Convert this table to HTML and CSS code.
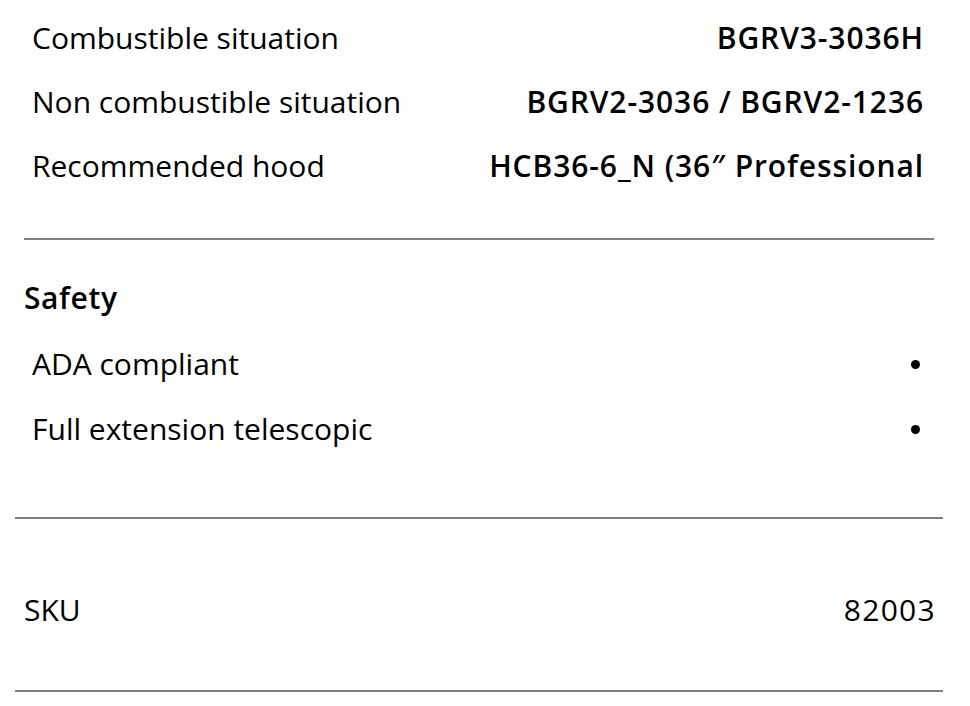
FILE: index.html
```html
<!DOCTYPE html>
<html>
<head>
<meta charset="utf-8">
<link rel="stylesheet" href="styles.css">
</head>
<body>
<div class="page">
  <section class="group">
    <div class="specs">
      <div class="row"><span class="label">Combustible situation</span><span class="value">BGRV3-3036H</span></div>
      <div class="row"><span class="label">Non combustible situation</span><span class="value">BGRV2-3036 / BGRV2-1236</span></div>
      <div class="row"><span class="label">Recommended hood</span><span class="value">HCB36-6_N (36″ Professional</span></div>
    </div>
  </section>
  <section class="group2">
    <h3 class="heading">Safety</h3>
    <div class="specs">
      <div class="row row-b"><span class="label">ADA compliant</span><span class="dot"></span></div>
      <div class="row row-b"><span class="label">Full extension telescopic</span><span class="dot"></span></div>
    </div>
  </section>
  <section class="sku">
    <span class="label">SKU</span><span class="sku-val">82003</span>
  </section>
</div>
</body>
</html>
```

FILE: styles.css
```css
html, body { margin: 0; padding: 0; background: #fff; }
body {
  font-family: "Open Sans", "Liberation Sans", sans-serif;
  color: #000;
  font-size: 30px;
}
.page { padding: 0 27px 0 15px; }
.group { margin: 0 9px; padding: 6px 0 40px; border-bottom: 2px solid #808080; }
.specs { padding: 0 11px 0 8px; }
.row {
  display: flex; justify-content: space-between; align-items: center;
  height: 64px; box-sizing: border-box; padding-bottom: 1px;
}
.row-b { height: 65px; }
.label { font-weight: 400; }
.value { font-weight: 600; letter-spacing: 0.9px; margin-right: -1px; }
.group2 { border-bottom: 2px solid #808080; padding-bottom: 55px; }
.group2 .specs { padding: 0 23px 0 17px; }
.group2 .row { padding-bottom: 2px; }
.dot { width: 9px; height: 9px; border-radius: 50%; background: #000; margin-top: 2px; }
.heading {
  margin: 26px 0 2px 9px; font-size: 30px; font-weight: 600; letter-spacing: 0.6px;
  line-height: 64px; height: 64px;
}
.sku {
  display: flex; justify-content: space-between; align-items: center;
  height: 64px; padding: 60px 8px 47px 9px; border-bottom: 2px solid #808080;
}
.sku .label, .sku-val { position: relative; top: -2px; }
.sku-val { letter-spacing: 1.3px; margin-right: -1px; }
```
